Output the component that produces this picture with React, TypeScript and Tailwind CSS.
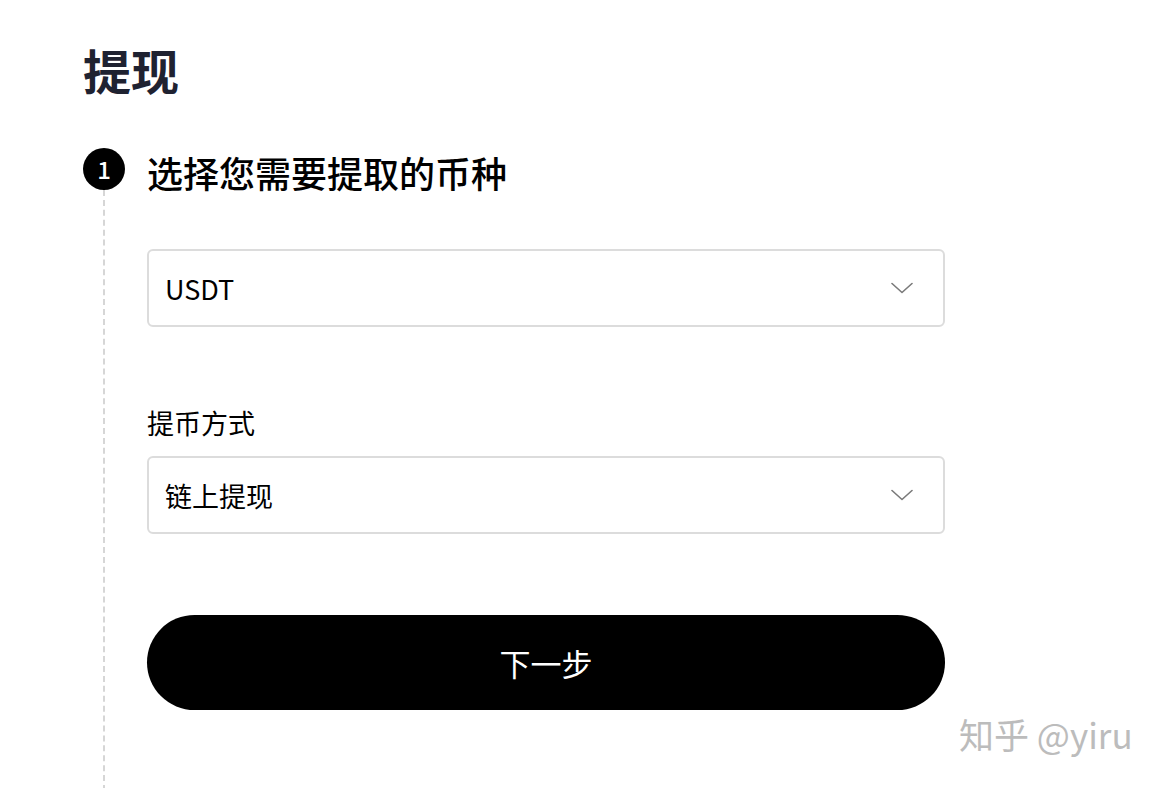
const font = { fontFamily: '"Noto Sans CJK SC", "Noto Sans", sans-serif' };

function Chevron() {
  return (
    <svg width="22" height="12" viewBox="0 0 22 12" fill="none" className="text-[#7a7a7a]">
      <path d="M1 1.5 L11 10.5 L21 1.5" stroke="currentColor" strokeWidth="1.6" strokeLinecap="round" strokeLinejoin="round" />
    </svg>
  );
}

function Select({ value }: { value: string }) {
  return (
    <div className="flex h-[78px] w-[798px] items-center justify-between rounded-[6px] border-2 border-[#dcdcdc] bg-white pl-[16px] pr-[30px]">
      <span className="text-[27px] leading-none text-black">{value}</span>
      <Chevron />
    </div>
  );
}

export default function App() {
  return (
    <div className="relative h-[788px] w-[1166px] overflow-hidden bg-white" style={font}>
      <h1 className="pl-[83px] pt-[45px] text-[48px] font-bold leading-none text-[#1f2231]">提现</h1>

      <div className="mt-[55px] flex h-[643px] pl-[83px]">
        <div className="flex w-[42px] flex-col items-center">
          <div className="flex h-[42px] w-[42px] shrink-0 items-center justify-center rounded-full bg-black text-[24px] font-medium leading-none text-white">
            1
          </div>
          <div className="w-0 flex-1 border-l-2 border-dashed border-[#d6d6d6]" />
        </div>

        <div className="ml-[22px] flex flex-col pt-[6px]">
          <h2 className="text-[36px] font-medium leading-none text-black">选择您需要提取的币种</h2>

          <div className="mt-[59px]">
            <Select value="USDT" />
          </div>

          <label className="mt-[82px] text-[27px] leading-none text-black">提币方式</label>
          <div className="mt-[20px]">
            <Select value="链上提现" />
          </div>

          <button className="mt-[81px] flex h-[95px] w-[798px] items-center justify-center rounded-full bg-black text-[31px] leading-none text-white">
            下一步
          </button>
        </div>
      </div>

      <div className="absolute left-[959px] top-[716px] text-[35px] leading-none text-[#bcbcbc]">知乎 @yiru</div>
    </div>
  );
}
